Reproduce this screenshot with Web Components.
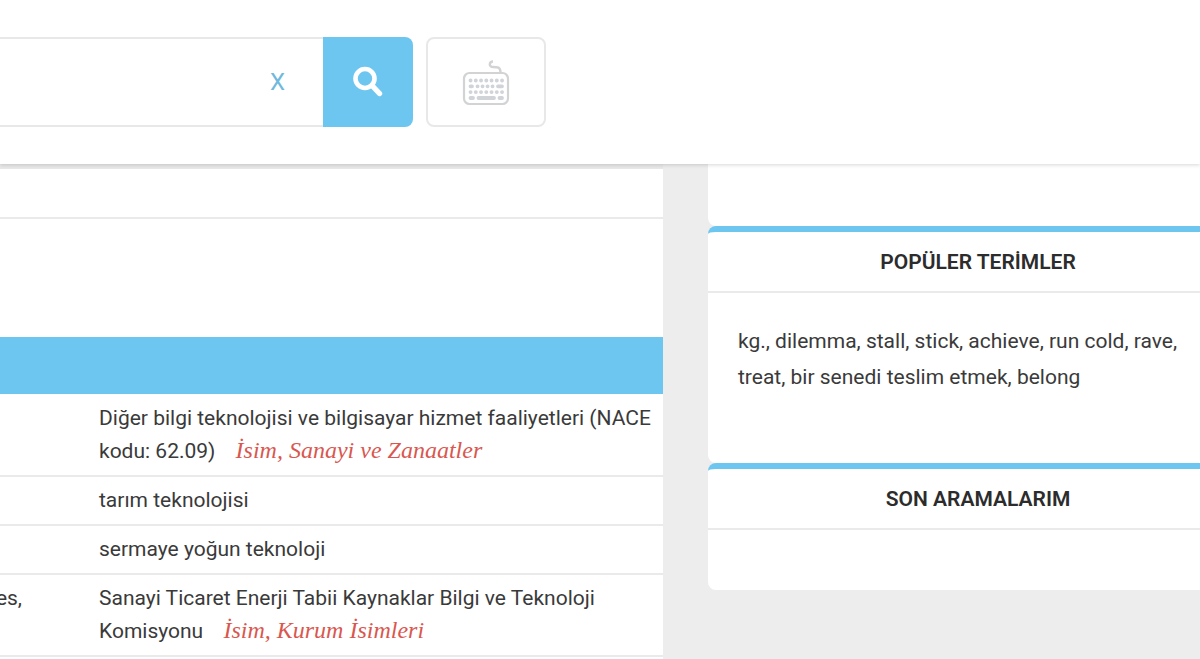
<!DOCTYPE html>
<html lang="tr">
<head>
<meta charset="utf-8">
<meta name="viewport" content="width=device-width, initial-scale=1">
<title>Sözlük</title>
<style>
  body { margin: 0; overflow-x: hidden; font-family: Roboto, sans-serif; font-size: 21px; color: #3a3a3a; background: #ededed;
    --accent: #6dc6f0; --line: #eaeaea; }
</style>
</head>
<body>
<dictionary-page>
  <search-bar slot="header"></search-bar>
  <result-table></result-table>
  <side-card slot="side" plain></side-card>
  <side-card slot="side" heading="POPÜLER TERİMLER" class="terms">kg., dilemma, stall, stick, achieve, run cold, rave, treat, bir senedi teslim etmek, belong</side-card>
  <side-card slot="side" heading="SON ARAMALARIM"></side-card>
</dictionary-page>

<template id="page">
  <style>
    :host { display: flex; flex-direction: column; min-height: 100vh; }
    header { position: relative; z-index: 1; background: #fff; padding: 37px 0; box-shadow: 0 1px 4px rgba(0,0,0,.16); }
    .columns { display: flex; flex: 1; gap: 45px; }
    main { flex: 1; min-width: 0; background: #fff; }
    /* The sidebar runs past the right edge of the window. */
    aside { flex: 0 0 540px; margin-right: -48px; }
  </style>
  <header><slot name="header"></slot></header>
  <div class="columns">
    <main><slot></slot></main>
    <aside><slot name="side"></slot></aside>
  </div>
</template>

<template id="search">
  <style>
    :host { display: block; }
    form { display: flex; max-width: 546px; height: 90px; }
    .field { flex: 1; min-width: 0; display: flex; box-sizing: border-box; border: solid #e8e8e8; border-width: 2px 0; }
    input { flex: 1; min-width: 0; border: 0; padding: 0 20px; font: inherit; outline: 0; background: none; }
    button { font: inherit; padding: 0; background: none; border: 0; cursor: pointer; display: grid; place-items: center; box-sizing: border-box; }
    .clear { width: 91px; color: #6fb9dd; font-size: 24px; }
    .go { width: 90px; background: var(--accent); border-radius: 0 8px 8px 0; }
    .keys { width: 120px; margin-left: 13px; border: 2px solid #e8e8e8; border-radius: 8px; }
    svg { display: block; }
  </style>
  <form onsubmit="return false">
    <div class="field">
      <input type="text" aria-label="Ara">
      <button class="clear" type="reset" aria-label="X">X</button>
    </div>
    <button class="go" type="submit" aria-label="Ara">
      <svg width="32" height="32" viewBox="0 0 32 32" fill="none" stroke="#fff"><circle cx="13" cy="12.500" r="9.500" stroke-width="4.600"/><path d="M20 19.500 L27.500 27.500" stroke-width="5.400" stroke-linecap="round"/></svg>
    </button>
    <button class="keys" type="button" aria-label="Klavye">
      <svg width="48" height="48" viewBox="0 0 48 48" fill="none" stroke="#d2d3d5">
        <rect x="2" y="15" width="44" height="31" rx="5.500" stroke-width="2.200"/>
        <path d="M31 3.500c-4 0-4.500 5.500 0 5.500s7.500 0 7.500 5.500" stroke-width="2.400"/>
        <g stroke-width="3.800" stroke="#d0d3d7" stroke-linecap="round">
          <path d="M8.500 22.500h32" stroke-dasharray="0.100 5.150"/>
          <path d="M8.500 28.300h1.500M15.500 28.300h.1M20.500 28.300h.1M25.500 28.300h.1M30.500 28.300h.1M36 28.300h4"/>
          <path d="M8.500 34.100h32" stroke-dasharray="0.100 5.150"/>
          <path d="M8.500 40h2.500M16.500 40h15.500M37.500 40h2.500"/>
        </g>
      </svg>
    </button>
  </form>
</template>

<template id="results">
  <style>
    :host { display: block; }
    .top { height: 5px; background: #e8e8e8; }
    .bar { height: 48px; border-bottom: 2px solid var(--line); }
    .space { height: 118px; }
    table { width: 100%; table-layout: fixed; border-collapse: separate; border-spacing: 0; }
    col:first-child { width: 99px; }
    th { height: 57px; padding: 0; background: var(--accent); border-bottom: 1px solid #fff; }
    td { padding: 7px 0; line-height: 33px; vertical-align: top; border-bottom: 2px solid var(--line); }
    /* Long terms run out past the left edge. */
    .term { direction: rtl; padding-right: 77px; white-space: nowrap; }
    i { margin-left: 15px; font: italic 24px/20px Georgia, "Liberation Serif", serif; color: #d9574f; }
  </style>
  <div class="top"></div>
  <div class="bar"></div>
  <div class="space"></div>
  <table>
    <colgroup><col><col></colgroup>
    <thead><tr><th></th><th></th></tr></thead>
    <tbody>
      <tr><td class="term"></td><td>Diğer bilgi teknolojisi ve bilgisayar hizmet faaliyetleri (NACE kodu: 62.09) <i>İsim, Sanayi ve Zanaatler</i></td></tr>
      <tr><td class="term"></td><td>tarım teknolojisi</td></tr>
      <tr><td class="term"></td><td>sermaye yoğun teknoloji</td></tr>
      <tr><td class="term"><bdi dir="ltr">es,</bdi></td><td>Sanayi Ticaret Enerji Tabii Kaynaklar Bilgi ve Teknoloji Komisyonu <i>İsim, Kurum İsimleri</i></td></tr>
    </tbody>
  </table>
</template>

<template id="card">
  <style>
    :host { display: block; background: #fff; border-radius: 8px; border-top: 6px solid var(--accent); }
    :host([plain]) { border-top: 0; border-radius: 0 0 8px 8px; height: 62px; }
    :host([plain]) h2, :host([plain]) .body { display: none; }
    h2 { margin: 0; padding-top: 2px; font-size: 21px; font-weight: 600; line-height: 57px; text-align: center; color: #2c2c2c; border-bottom: 2px solid var(--line); }
    .body { padding: 30px; line-height: 36px; }
    :host(.terms) .body { padding-bottom: 68px; }
  </style>
  <h2></h2>
  <div class="body"><slot></slot></div>
</template>

<script>
  class TemplateElement extends HTMLElement {
    constructor() {
      super();
      this.attachShadow({ mode: "open" }).append(
        document.getElementById(this.constructor.template).content.cloneNode(true));
    }
  }
  customElements.define("dictionary-page", class extends TemplateElement { static template = "page"; });
  customElements.define("search-bar", class extends TemplateElement { static template = "search"; });
  customElements.define("result-table", class extends TemplateElement { static template = "results"; });
  customElements.define("side-card", class extends TemplateElement {
    static template = "card";
    connectedCallback() {
      this.shadowRoot.querySelector("h2").textContent = this.getAttribute("heading") || "";
    }
  });
</script>
</body>
</html>
